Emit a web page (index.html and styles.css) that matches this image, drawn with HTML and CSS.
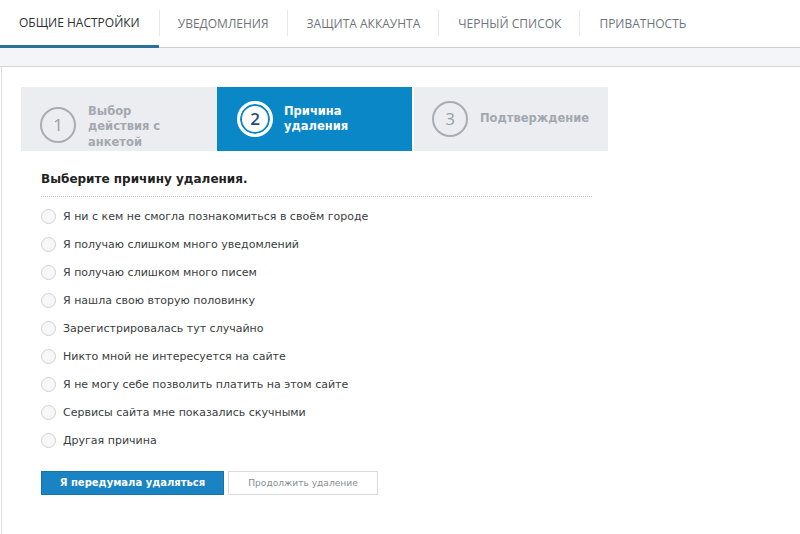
FILE: index.html
```html
<!DOCTYPE html>
<html lang="ru">
<head>
<meta charset="utf-8">
<link rel="stylesheet" href="styles.css">
</head>
<body>
<nav class="tabs">
  <div class="tab active">ОБЩИЕ НАСТРОЙКИ</div>
  <div class="tab">УВЕДОМЛЕНИЯ</div>
  <div class="tab">ЗАЩИТА АККАУНТА</div>
  <div class="tab">ЧЕРНЫЙ СПИСОК</div>
  <div class="tab last">ПРИВАТНОСТЬ</div>
</nav>
<div class="band"></div>
<main class="panel">
  <div class="steps">
    <div class="step s1"><span class="num">1</span><span class="label">Выбор<br>действия с<br>анкетой</span></div>
    <div class="step s2 current"><span class="num">2</span><span class="label">Причина<br>удаления</span></div>
    <div class="step s3"><span class="num">3</span><span class="label">Подтверждение</span></div>
  </div>
  <section class="reasons">
    <h2 class="title">Выберите причину удаления.</h2>
    <ul class="list">
      <li><span class="radio"></span>Я ни с кем не смогла познакомиться в своём городе</li>
      <li><span class="radio"></span>Я получаю слишком много уведомлений</li>
      <li><span class="radio"></span>Я получаю слишком много писем</li>
      <li><span class="radio"></span>Я нашла свою вторую половинку</li>
      <li><span class="radio"></span>Зарегистрировалась тут случайно</li>
      <li><span class="radio"></span>Никто мной не интересуется на сайте</li>
      <li><span class="radio"></span>Я не могу себе позволить платить на этом сайте</li>
      <li><span class="radio"></span>Сервисы сайта мне показались скучными</li>
      <li><span class="radio"></span>Другая причина</li>
    </ul>
    <div class="actions">
      <button class="btn primary">Я передумала удаляться</button>
      <button class="btn secondary">Продолжить удаление</button>
    </div>
  </section>
</main>
</body>
</html>
```
FILE: styles.css
```css
* { box-sizing: border-box; }
html, body { margin: 0; padding: 0; background: #fff; }
body { font-family: "DejaVu Sans", Verdana, sans-serif; color: #333; width: 800px; height: 534px; overflow: hidden; }

.tabs {
  display: flex;
  height: 48px;
  border-bottom: 1px solid #cfd1d4;
  background: #fff;
}
.tab {
  position: relative;
  font-family: "Open Sans", "Noto Sans", sans-serif;
  font-size: 12px;
  color: #6f7479;
  padding: 0 19px 1px;
  height: 47px;
  display: flex;
  align-items: center;
  white-space: nowrap;
}
.tab::after {
  content: "";
  position: absolute;
  right: 0;
  top: 10px;
  height: 26px;
  border-right: 1px solid #e6e8ea;
}
.tab.last::after { display: none; }
.tab.active {
  color: #2c3034;
  border-bottom: 3px solid #2a7198;
  padding-bottom: 0;
  height: 48px;
  margin-bottom: -1px;
}
.tab.active::after { display: none; }
.tab.active + .tab::before {
  content: "";
  position: absolute;
  left: 0;
  top: 10px;
  height: 26px;
  border-left: 1px solid #e6e8ea;
}

.band {
  height: 19px;
  background: #f4f5f8;
  border-bottom: 1px solid #d3d5d8;
}

.panel {
  margin-left: 1px;
  border-left: 1px solid #dcdee0;
  padding: 20px 0 0 19px;
  height: 467px;
}

.steps { display: flex; height: 64px; }
.step {
  display: flex;
  align-items: center;
  background: #ebedf1;
  color: #a3a8ae;
  font-weight: bold;
  font-size: 11.5px;
  line-height: 15.5px;
}
.s1 { width: 196px; padding-left: 19px; padding-top: 12px; }
.s1 .label { padding-top: 4px; }
.s2 { width: 195px; padding-left: 20px; }
.s3 { width: 194px; margin-left: 2px; padding-left: 18px; }
.num {
  flex: none;
  width: 36px;
  height: 36px;
  border: 2px solid #a9adb2;
  border-radius: 50%;
  display: flex;
  align-items: center;
  justify-content: center;
  font-family: "Open Sans", sans-serif;
  font-size: 17px;
  font-weight: normal;
  color: #9a9ea4;
  margin-right: 12px;
}
.s2 .num { margin-right: 11px; }
.current { background: #0a87c7; color: #fff; }
.current .num {
  border: 3px solid #fff;
  background: #fff;
  box-shadow: inset 0 0 0 2px #0a87c7;
  color: #1c4f7c;
  font-weight: 600;
}
.s3 .num { margin-right: 12px; }

.reasons { padding: 20px 0 0 20px; width: 571px; }
.title {
  margin: 0;
  font-size: 12px;
  font-weight: bold;
  color: #222;
  line-height: 16px;
  padding-bottom: 9px;
  border-bottom: 1px dotted #b9bcbf;
}
.list { list-style: none; margin: 5px 0 0; padding: 0; }
.list li {
  display: flex;
  align-items: center;
  height: 28.1px;
  font-size: 11px;
  color: #3a3d40;
}
.radio {
  width: 15px;
  height: 15px;
  border: 1px solid #d0d2d5;
  border-radius: 50%;
  background: #f7f7f8;
  margin-right: 7px;
}

.actions { display: flex; gap: 4px; margin-top: 16px; }
.btn {
  height: 24px;
  font-family: "DejaVu Sans", Verdana, sans-serif;
  white-space: nowrap;
  padding: 0;
  cursor: pointer;
}
.primary {
  width: 183px;
  background: #1a83c4;
  border: 1px solid #1674ad;
  color: #fff;
  font-weight: bold;
  font-size: 10px;
}
.secondary {
  width: 150px;
  background: #fff;
  border: 1px solid #d8dadd;
  color: #8a8e93;
  font-size: 9.1px;
}
```
